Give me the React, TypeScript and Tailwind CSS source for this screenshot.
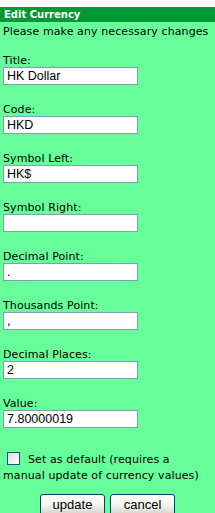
import React from 'react';

const fields = [
  { label: 'Title:', value: 'HK Dollar' },
  { label: 'Code:', value: 'HKD' },
  { label: 'Symbol Left:', value: 'HK$' },
  { label: 'Symbol Right:', value: '' },
  { label: 'Decimal Point:', value: '.' },
  { label: 'Thousands Point:', value: ',' },
  { label: 'Decimal Places:', value: '2' },
  { label: 'Value:', value: '7.80000019' },
];

const XpButton: React.FC<{ label: string }> = ({ label }) => (
  <button
    type="button"
    className="h-[22px] w-[65px] rounded-[3px] border border-[#003c74] bg-gradient-to-b from-white via-[#f4f4f0] to-[#d6d0c5] text-[13px] leading-[20px] text-black font-['Liberation_Sans',sans-serif]"
  >
    {label}
  </button>
);

export default function App() {
  return (
    <div className="w-[215px] h-[513px] overflow-hidden bg-white pt-[7px] font-['DejaVu_Sans',sans-serif] text-[11px] text-black">
      <div className="bg-[#009933] h-[15px] px-[4px] text-white text-[10px] font-bold leading-[15px]">Edit Currency</div>
      <div className="bg-[#66ff99] h-full px-[3px]">
        <div className="pt-[3px] leading-[13px] tracking-[0.1px]">Please make any necessary changes</div>
        <div className="pt-[16px] flex flex-col gap-[18px]">
          {fields.map((f) => (
            <div key={f.label} className="flex flex-col">
              <div className="leading-[13px] h-[13px] tracking-[0.1px]">{f.label}</div>
              <input
                readOnly
                value={f.value}
                className="w-[135px] h-[18px] border border-[#7f9db9] bg-white px-[3px] text-[12.5px] text-black outline-none font-['Liberation_Sans',sans-serif]"
              />
            </div>
          ))}
        </div>
        <div className="pt-[24px] leading-[16px] tracking-[0.1px]">
          <span className="inline-block align-[-2px] w-[13px] h-[13px] ml-[4px] mr-[8px] border border-[#1c5180] bg-gradient-to-br from-[#dcdcd7] to-white" />
          Set as default (requires a<br />
          manual update of currency values)
        </div>
        <div className="pt-[10px] flex justify-center gap-[5px]">
          <XpButton label="update" />
          <XpButton label="cancel" />
        </div>
      </div>
    </div>
  );
}
